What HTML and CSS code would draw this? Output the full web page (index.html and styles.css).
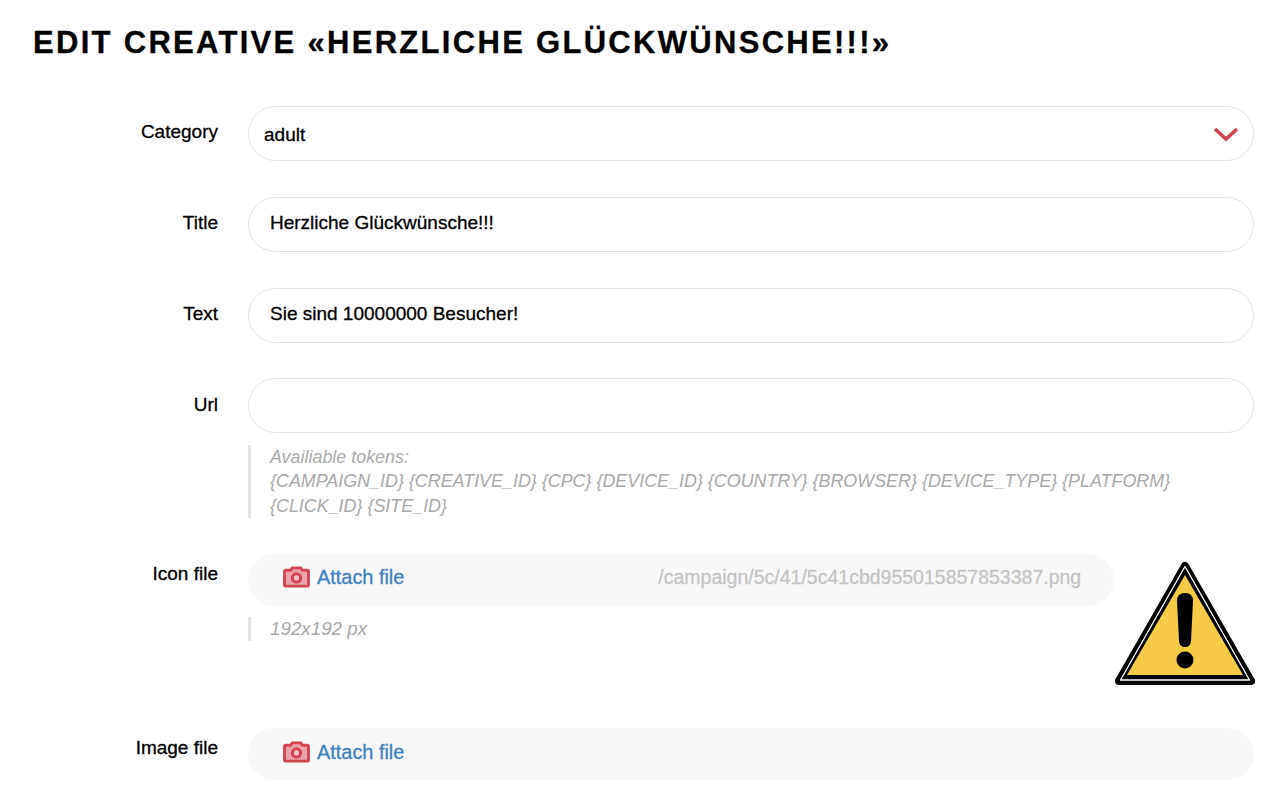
FILE: index.html
```html
<!DOCTYPE html>
<html lang="en">
<head>
    <meta charset="UTF-8">
    <meta name="viewport" content="width=device-width, initial-scale=1.0">
    <title>Edit creative</title>
    <link rel="stylesheet" href="styles.css">
</head>
<body>

    <div class="page">
        <h1>Edit creative «Herzliche Glückwünsche!!!»</h1>

        <form class="form">
            <div class="row">
                <label class="label">Category</label>
                <div class="control">
                    <div class="select">
                        <span>adult</span>
                        <svg class="chevron" width="26" height="16" viewBox="0 0 26 16"><path d="M2 3 L13 13 L24 3" fill="none" stroke="#d2434f" stroke-width="3.6"/></svg>
                    </div>
                </div>
            </div>

            <div class="row">
                <label class="label">Title</label>
                <div class="control"><div class="input">Herzliche Glückwünsche!!!</div></div>
            </div>

            <div class="row row-text">
                <label class="label">Text</label>
                <div class="control"><div class="input">Sie sind 10000000 Besucher!</div></div>
            </div>

            <div class="row row-url">
                <label class="label">Url</label>
                <div class="control">
                    <div class="input"></div>
                    <div class="hint">
                        Availiable tokens:<br>
                        {CAMPAIGN_ID} {CREATIVE_ID} {CPC} {DEVICE_ID} {COUNTRY} {BROWSER} {DEVICE_TYPE} {PLATFORM}<br>
                        {CLICK_ID} {SITE_ID}
                    </div>
                </div>
            </div>

            <div class="row row-icon">
                <label class="label label-file">Icon file</label>
                <div class="control">
                    <div class="file file-short">
                        <svg class="camera" width="27" height="23" viewBox="0 0 28 24">
                            <path d="M9.500 3 H18.500 L20 5.500 H25 Q26.500 5.500 26.500 7 V20.500 Q26.500 22 25 22 H3 Q1.500 22 1.500 20.500 V7 Q1.500 5.500 3 5.500 H8 Z" fill="#eba5aa" stroke="#d2434f" stroke-width="3" stroke-linejoin="round"/>
                            <circle cx="14" cy="13.500" r="4.300" fill="#f3c6ca" stroke="#d2434f" stroke-width="3.200"/>
                        </svg>
                        <span class="attach">Attach file</span>
                        <span class="filename">/campaign/5c/41/5c41cbd955015857853387.png</span>
                    </div>
                    <div class="hint hint-size">192x192 px</div>
                    <svg class="warning" width="140" height="126" viewBox="0 0 140 126">
                        <path d="M70 6 L136 121 H4 Z" fill="#000" stroke="#000" stroke-width="8" stroke-linejoin="round"/>
                        <path d="M70 6.500 L134.500 120 H5.500 Z" fill="none" stroke="#fff" stroke-width="1.300" stroke-linejoin="round"/>
                        <path d="M70 15 L128 115 H12 Z" fill="#f7cb45"/>
                        <path d="M62 41 Q62 33 70 33 Q78 33 78 41 L76 81 Q75.500 87 70 87 Q64.500 87 64 81 Z" fill="#000"/>
                        <circle cx="70" cy="100" r="8.500" fill="#000"/>
                    </svg>
                </div>
            </div>

            <div class="row">
                <label class="label label-file">Image file</label>
                <div class="control">
                    <div class="file">
                        <svg class="camera" width="27" height="23" viewBox="0 0 28 24">
                            <path d="M9.500 3 H18.500 L20 5.500 H25 Q26.500 5.500 26.500 7 V20.500 Q26.500 22 25 22 H3 Q1.500 22 1.500 20.500 V7 Q1.500 5.500 3 5.500 H8 Z" fill="#eba5aa" stroke="#d2434f" stroke-width="3" stroke-linejoin="round"/>
                            <circle cx="14" cy="13.500" r="4.300" fill="#f3c6ca" stroke="#d2434f" stroke-width="3.200"/>
                        </svg>
                        <span class="attach">Attach file</span>
                    </div>
                </div>
            </div>
        </form>
    </div>

</body>
</html>
```

FILE: styles.css
```css
body {
    font-family: "Liberation Sans", Arial, sans-serif;
    color: black;
    background: white;
    margin: 0;
    padding: 0;
}
.page {
    padding: 24px 26px 0 33px;
}
h1 {
    margin: 0 0 45px;
    font-size: 31px;
    line-height: 37px;
    font-weight: bold;
    letter-spacing: 2.3px;
    text-transform: uppercase;
    -webkit-text-stroke: 0.3px black;
}
.row {
    display: flex;
    margin-bottom: 36px;
}
.row-text {
    margin-bottom: 35px;
}
.row-url {
    margin-bottom: 35.500px;
}
.row-icon {
    margin-bottom: 87px;
}
.label {
    width: 185px;
    flex-shrink: 0;
    margin-right: 30px;
    padding-top: 15px;
    text-align: right;
    font-size: 19px;
    line-height: 22px;
    -webkit-text-stroke: 0.3px black;
}
.row-url .label {
    padding-top: 16px;
}
.label-file {
    padding-top: 9px;
}
.control {
    flex: 1;
    position: relative;
}
.input, .select {
    box-sizing: border-box;
    height: 55px;
    border: 1px solid #e2e2e2;
    border-radius: 28px;
    padding: 0 21px 4px;
    display: flex;
    align-items: center;
    font-size: 19px;
    -webkit-text-stroke: 0.3px black;
}
.select {
    justify-content: space-between;
    padding: 0 14px 0 15px;
}
.select span {
    padding-top: 2px;
}
.hint {
    margin-top: 11.600px;
    border-left: 3px solid #e2e2e2;
    padding-left: 19px;
    font-size: 17.900px;
    line-height: 24.500px;
    font-style: italic;
    color: #a9a9a9;
}
.hint-size {
    margin-top: 11px;
    font-size: 18.800px;
}
.file {
    box-sizing: border-box;
    height: 52px;
    border-radius: 26px;
    background: #f8f8f8;
    padding: 0 0 4px 35px;
    display: flex;
    align-items: center;
    font-size: 19.500px;
    white-space: nowrap;
}
.file-short {
    width: 866px;
    padding-bottom: 5px;
}
.camera {
    margin-right: 7px;
    flex-shrink: 0;
    margin-top: -2px;
}
.attach {
    color: #3a82c4;
    font-size: 19.900px;
    -webkit-text-stroke: 0.3px #3a82c4;
}
.filename {
    margin-left: 254px;
    color: #c4c4c4;
    -webkit-text-stroke: 0.3px #c4c4c4;
}
.warning {
    position: absolute;
    left: 867px;
    top: 6px;
}
```
